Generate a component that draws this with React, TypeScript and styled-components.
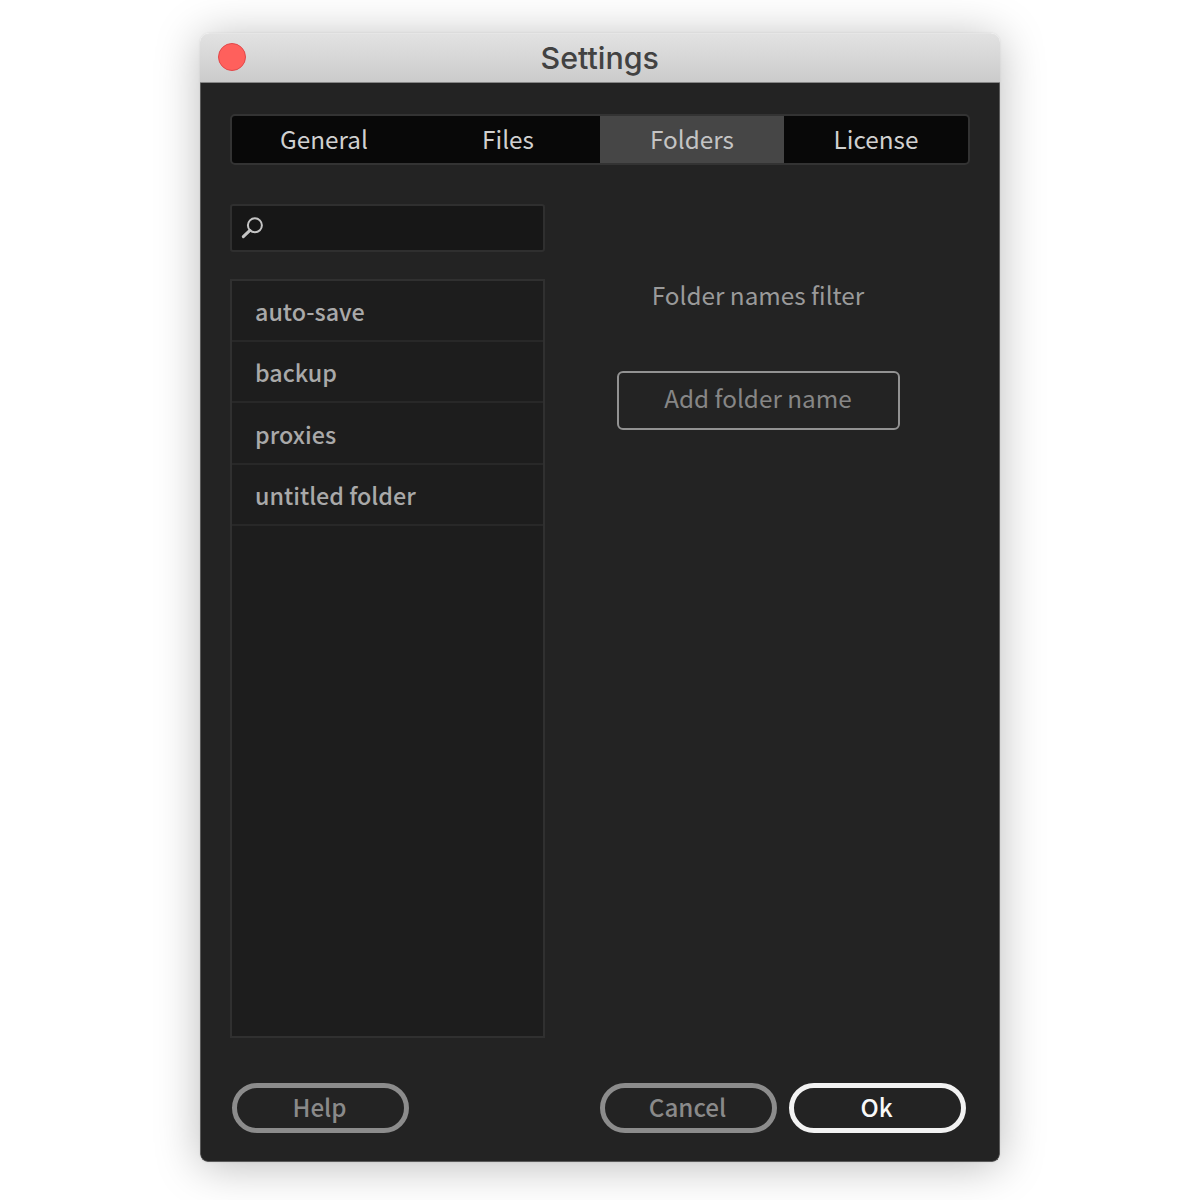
import React, { useState } from "react";
import styled, { createGlobalStyle } from "styled-components";

const GlobalStyle = createGlobalStyle`
  *, *::before, *::after { box-sizing: border-box; }
  html, body { margin: 0; padding: 0; background: #fff; }
  body { overflow: hidden; }
  button, input { font: inherit; margin: 0; }
`;

const Page = styled.div`
  width: 1200px;
  height: 1200px;
  padding: 33px 200px 39px;
  font-family: "Noto Sans CJK SC", "Noto Sans", sans-serif;
  font-size: 24.3px;
  line-height: 36px;
`;

const Window = styled.main`
  display: flex;
  flex-direction: column;
  width: 799.5px;
  height: 1128.5px;
  border-radius: 9px 9px 8px 8px;
  overflow: hidden;
  box-shadow: 0 0 2px rgba(0, 0, 0, 0.1), 0 4px 45px rgba(0, 0, 0, 0.27);
`;

const TitleBar = styled.header`
  display: grid;
  grid-template-columns: 64px 1fr 64px;
  align-items: center;
  height: 50px;
  flex: none;
  background: linear-gradient(#e2e2e2, #cbcbcb);
  border-top: 1px solid #e6e6e6;
  border-bottom: 1px solid #868686;
  border-radius: 9px 9px 0 0;
`;

const CloseButton = styled.button`
  width: 28px;
  height: 28px;
  margin: -2px 0 0 17.7px;
  padding: 0;
  border: 1px solid #e2484a;
  border-radius: 50%;
  background: #ff605c;
`;

const Title = styled.h1`
  margin: 0;
  text-align: center;
  font: 450 30.4px/46px Inter, sans-serif;
  color: #424242;
`;

const Content = styled.div`
  display: flex;
  flex-direction: column;
  flex: 1;
  padding: 30.5px 28.5px 27.5px 29px;
  border: 1px solid #5a5a5a;
  border-top: 0;
  border-radius: 0 0 8px 8px;
  background: #232323;
`;

const Tabs = styled.nav`
  display: grid;
  grid-template-columns: repeat(4, 1fr);
  height: 51px;
  flex: none;
  border: 2px solid #333;
  border-radius: 5px;
  background: #080808;
  overflow: hidden;
`;

const Tab = styled.button<{ $active: boolean }>`
  padding: 0;
  border: 0;
  background: ${(p) => (p.$active ? "#464646" : "transparent")};
  color: ${(p) => (p.$active ? "#c4c4c4" : "#d0d0d0")};
`;

const Columns = styled.section`
  display: grid;
  grid-template-columns: 315px 283px;
  column-gap: 71.5px;
  margin-top: 39px;
  height: 834.5px;
`;

const Sidebar = styled.div`
  display: flex;
  flex-direction: column;
  gap: 26.5px;
`;

const SearchBox = styled.label`
  display: flex;
  align-items: center;
  gap: 8px;
  height: 48.5px;
  flex: none;
  padding-left: 8.5px;
  border: 2px solid #2f2f2f;
  border-radius: 3px;
  background: #171717;
`;

const SearchInput = styled.input`
  width: 250px;
  border: 0;
  outline: 0;
  background: transparent;
  color: #c8c8c8;
`;

const FolderList = styled.ul`
  flex: 1;
  margin: 0;
  padding: 0;
  list-style: none;
  border: 2px solid #303030;
  background: #1d1d1d;
`;

const FolderRow = styled.li`
  height: 61.4px;
  padding: 12.4px 23px 0;
  border-bottom: 2px solid #282828;
  color: #a9a9a9;
  font-size: 23.3px;
  font-weight: 500;
`;

const FilterPanel = styled.div`
  display: flex;
  flex-direction: column;
  padding-top: 73px;
`;

const FilterTitle = styled.h2`
  margin: 0 0 58px;
  font-size: 24.3px;
  font-weight: 400;
  line-height: 36px;
  text-align: center;
  color: #9a9a9a;
`;

const AddButton = styled.button`
  height: 59px;
  padding: 0 0 4px;
  border: 2px solid #929292;
  border-radius: 6px;
  background: transparent;
  color: #868686;
`;

const Footer = styled.footer`
  display: flex;
  justify-content: space-between;
  margin-top: auto;
  padding: 0 4px 0 2px;
`;

const Actions = styled.div`
  display: flex;
  gap: 12px;
`;

const PillButton = styled.button<{ $primary?: boolean }>`
  width: 177px;
  height: 50px;
  padding: 0 2px 3px 0;
  border: 5px solid ${(p) => (p.$primary ? "#f2f2f2" : "#8c8c8c")};
  border-radius: 25px;
  background: transparent;
  color: ${(p) => (p.$primary ? "#f8f8f8" : "#8a8a8a")};
  font-size: 24.2px;
  font-weight: 500;
`;

const SearchIcon = () => (
  <svg width="24" height="24" viewBox="0 0 24 24" fill="none" stroke="#c4c4c4">
    <circle cx="13.9" cy="9.3" r="7" strokeWidth="2" />
    <path d="M8.9 14.4 2.3 20.7" strokeWidth="3" strokeLinecap="round" />
  </svg>
);

const tabs = ["General", "Files", "Folders", "License"];
const folders = ["auto-save", "backup", "proxies", "untitled folder"];

export default function App() {
  const [active, setActive] = useState("Folders");
  return (
    <Page>
      <GlobalStyle />
      <Window>
        <TitleBar>
          <CloseButton aria-label="Close" />
          <Title>Settings</Title>
        </TitleBar>
        <Content>
          <Tabs>
            {tabs.map((tab) => (
              <Tab key={tab} $active={tab === active} onClick={() => setActive(tab)}>
                {tab}
              </Tab>
            ))}
          </Tabs>
          <Columns>
            <Sidebar>
              <SearchBox>
                <SearchIcon />
                <SearchInput aria-label="Search folders" />
              </SearchBox>
              <FolderList>
                {folders.map((folder) => (
                  <FolderRow key={folder}>{folder}</FolderRow>
                ))}
              </FolderList>
            </Sidebar>
            <FilterPanel>
              <FilterTitle>Folder names filter</FilterTitle>
              <AddButton>Add folder name</AddButton>
            </FilterPanel>
          </Columns>
          <Footer>
            <PillButton>Help</PillButton>
            <Actions>
              <PillButton>Cancel</PillButton>
              <PillButton $primary>Ok</PillButton>
            </Actions>
          </Footer>
        </Content>
      </Window>
    </Page>
  );
}
